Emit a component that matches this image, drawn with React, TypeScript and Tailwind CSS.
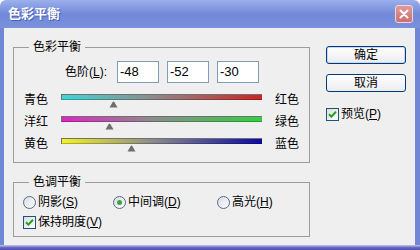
import React from "react";

const FONT = '"Liberation Sans", "Noto Sans CJK SC", sans-serif';

const Mnemonic: React.FC<{ text: string; letter: string }> = ({ text, letter }) => (
  <span>
    {text}(<span className="underline underline-offset-[1px]">{letter}</span>)
  </span>
);

const CheckBox: React.FC = () => (
  <span className="flex h-[13px] w-[13px] shrink-0 items-center justify-center border border-[#1c5180] bg-gradient-to-br from-[#dcdcd7] to-white">
    <svg width="9" height="9" viewBox="0 0 9 9">
      <path d="M1 4.2 L3.4 6.6 L8 1.8" fill="none" stroke="#21a121" strokeWidth="2" />
    </svg>
  </span>
);

const Radio: React.FC<{ checked?: boolean }> = ({ checked }) => (
  <span className="flex h-[13px] w-[13px] shrink-0 items-center justify-center rounded-full border border-[#536b88] bg-gradient-to-br from-[#d8dce4] to-white">
    {checked && <span className="h-[5px] w-[5px] rounded-full bg-[#3ea33e]" />}
  </span>
);

const Thumb: React.FC = () => (
  <svg width="9" height="7" viewBox="0 0 9 7">
    <path d="M0.5 6.5 L3.6 1.2 Q4.5 0 5.4 1.2 L8.5 6.5 Z" fill="#6e6e6e" />
  </svg>
);

const sliders = [
  { left: "青色", right: "红色", value: -48, bg: "bg-[linear-gradient(to_right,#3ed6d6,#8c8c8c_45%,#cc2424)]" },
  { left: "洋红", right: "绿色", value: -52, bg: "bg-[linear-gradient(to_right,#e024c4,#8c8c8c_45%,#30d040)]" },
  { left: "黄色", right: "蓝色", value: -30, bg: "bg-[linear-gradient(to_right,#f2f224,#8c8c8c_45%,#0a0aa4)]" },
];

export default function App() {
  return (
    <div className="flex h-[250px] w-[420px] flex-col text-[12px] leading-[14px] text-black" style={{ fontFamily: FONT }}>
      {/* title bar */}
      <div className="flex h-[28px] shrink-0 items-center rounded-t-[6px] bg-gradient-to-b from-[#9cb0ec] via-[#7189d9] to-[#7a91dc] pl-[8px] pr-[7px]">
        <span className="text-[13px] font-bold text-white [text-shadow:1px_1px_0_#4a5fb0]">色彩平衡</span>
        <div className="ml-auto flex h-[18px] w-[18px] items-center justify-center rounded-[3px] border border-[#f0d8d8] bg-gradient-to-b from-[#e09a9a] to-[#cc6f6f]">
          <svg width="10" height="10" viewBox="0 0 10 10">
            <path d="M1.5 1.5 L8.5 8.5 M8.5 1.5 L1.5 8.5" stroke="white" strokeWidth="2" strokeLinecap="round" />
          </svg>
        </div>
      </div>

      {/* body */}
      <div className="flex flex-1 border-l-[4px] border-r-[5px] border-[#7186d6] bg-[#efeff0]">
        <div className="pl-[9px] pt-[12px]">
          <fieldset className="h-[123px] w-[297px] border border-[#9c9c9c] px-0">
            <legend className="ml-[15px] px-[4px]">色彩平衡</legend>
            <div className="mt-[7px] flex items-center pl-[49px]">
              <span className="w-[44px] text-right">
                色阶(<span className="underline underline-offset-[1px]">L</span>):
              </span>
              <div className="ml-[10px] flex gap-[8px]">
                {["-48", "-52", "-30"].map((v) => (
                  <div key={v} className="flex h-[22px] w-[42px] items-center border border-[#7f9db9] bg-white pl-[2px] text-[13px]">
                    {v}
                  </div>
                ))}
              </div>
            </div>
            <div className="mt-[10px] flex flex-col">
              {sliders.map((s) => (
                <div key={s.left} className="flex h-[22px] items-start pl-[10px]">
                  <span className="w-[37px]">{s.left}</span>
                  <div className="mt-[1px] w-[201px]">
                    <div className={`h-[6px] border-l border-t border-[#707070] ${s.bg} shadow-[inset_0_-1px_0_rgba(0,0,0,0.25)]`} />
                    <div className="relative mt-[1px] h-[7px]">
                      <div className="absolute top-0" style={{ left: `${((s.value + 100) / 200) * 201 - 4.5}px` }}>
                        <Thumb />
                      </div>
                    </div>
                  </div>
                  <span className="ml-[13px]">{s.right}</span>
                </div>
              ))}
            </div>
          </fieldset>

          <fieldset className="mt-[12px] h-[62px] w-[297px] border border-[#9c9c9c] px-0">
            <legend className="ml-[15px] px-[4px]">色调平衡</legend>
            <div className="mt-[6px] flex h-[14px] items-center pl-[9px]">
              <div className="flex w-[90px] items-center gap-[2px]">
                <Radio />
                <Mnemonic text="阴影" letter="S" />
              </div>
              <div className="flex w-[104px] items-center gap-[2px]">
                <Radio checked />
                <Mnemonic text="中间调" letter="D" />
              </div>
              <div className="flex items-center gap-[2px]">
                <Radio />
                <Mnemonic text="高光" letter="H" />
              </div>
            </div>
            <div className="mt-[6px] flex items-center gap-[2px] pl-[9px]">
              <CheckBox />
              <Mnemonic text="保持明度" letter="V" />
            </div>
          </fieldset>
        </div>

        <div className="ml-[16px] flex w-[80px] flex-col pt-[18px]">
          <button className="flex h-[18px] w-[80px] items-center justify-center rounded-[3px] border border-[#003c74] bg-gradient-to-b from-white to-[#ecebf0] shadow-[inset_0_0_0_1px_#c8d8f4]">
            确定
          </button>
          <button className="mt-[10px] flex h-[18px] w-[80px] items-center justify-center rounded-[3px] border border-[#003c74] bg-gradient-to-b from-white to-[#ecebf0]">
            取消
          </button>
          <div className="mt-[15px] flex items-center gap-[2px]">
            <CheckBox />
            <Mnemonic text="预览" letter="P" />
          </div>
        </div>
      </div>

      {/* bottom frame */}
      <div className="h-[5px] shrink-0 bg-gradient-to-b from-[#c8c8ec] via-[#6a6ac4] to-[#4e4eaa]" />
    </div>
  );
}
